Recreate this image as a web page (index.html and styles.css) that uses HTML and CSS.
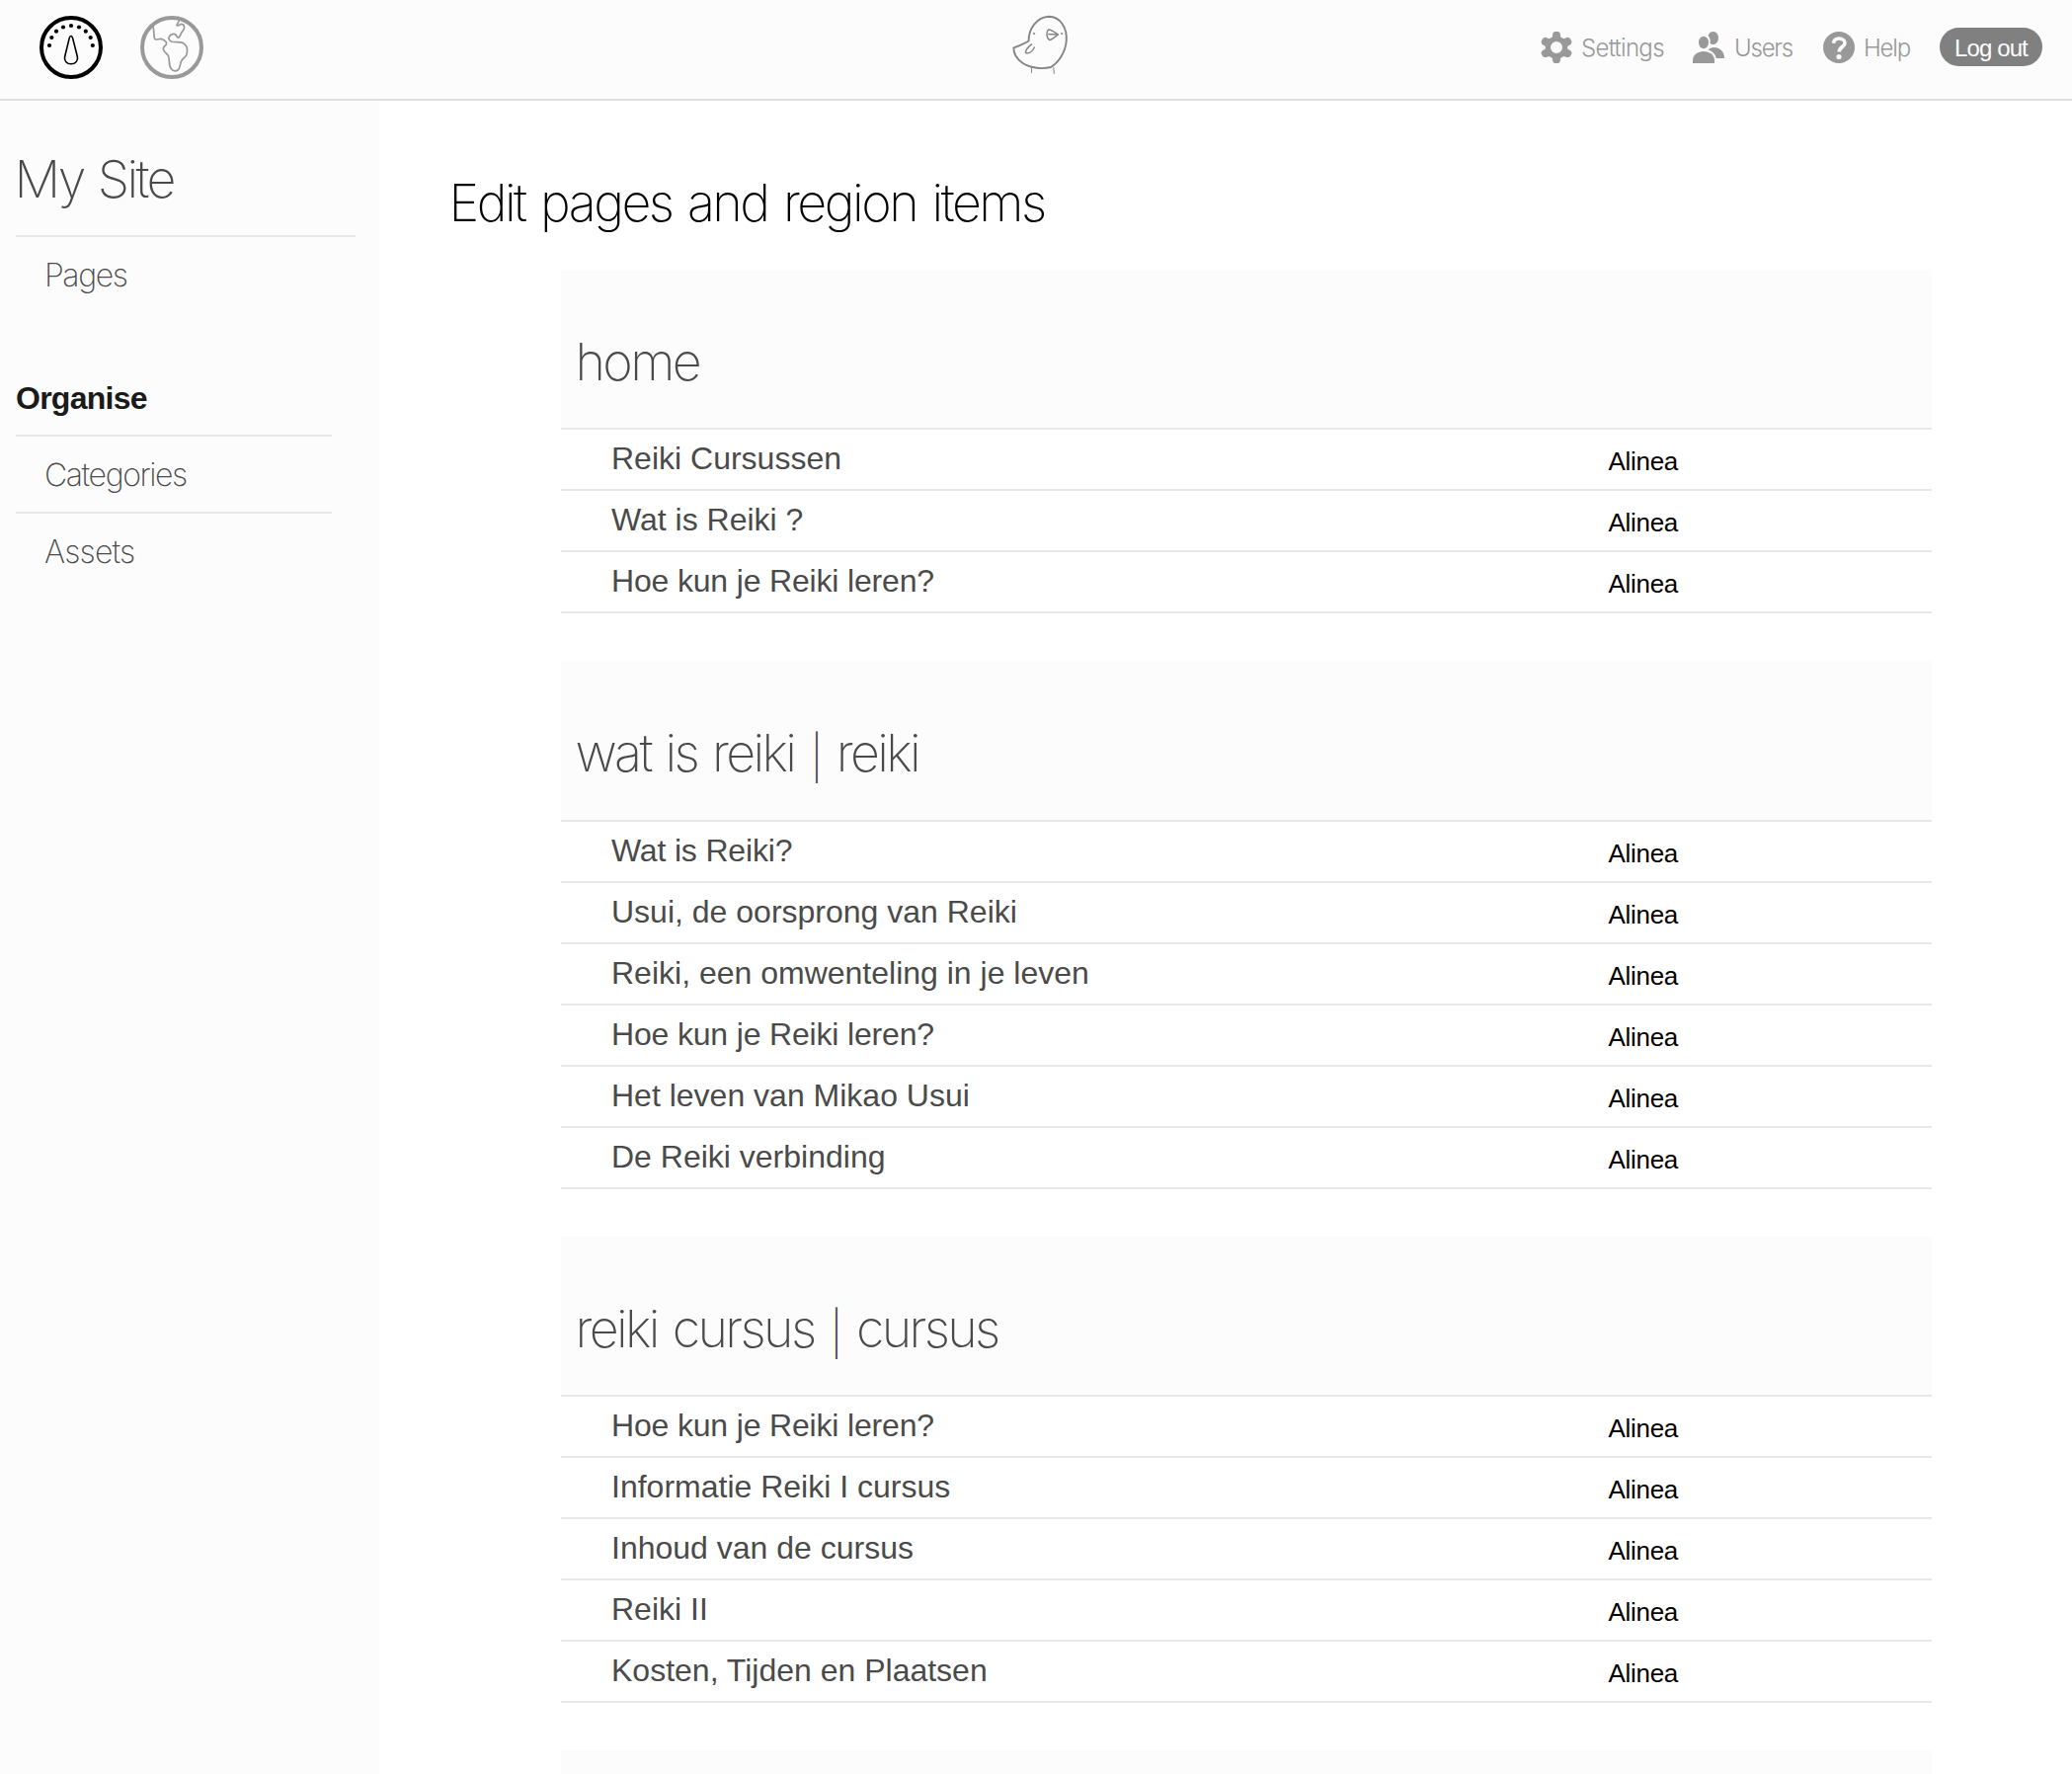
FILE: index.html
```html
<!DOCTYPE html>
<html lang="en">
<head>
<meta charset="utf-8">
<title>Edit pages and region items</title>
<link rel="stylesheet" href="styles.css">
</head>
<body>
<header class="topbar">
  <nav class="modes">
    <svg class="mode-icon" viewBox="0 0 64 64" fill="none" stroke="#000">
      <circle cx="32" cy="32" r="30" stroke-width="4"/>
      <path d="M31.9 20.5C30.9 20.5 30.5 21.4 30.2 22.6L25.6 41.5C24.6 45.6 27.8 48.8 31.9 48.8C36 48.8 39.4 45.6 38.4 41.5L33.6 22.6C33.3 21.4 32.9 20.5 31.9 20.5Z" stroke-width="1.6"/>
      <g fill="#000" stroke="none">
        <circle cx="10" cy="30" r="2.1"/><circle cx="12.3" cy="22" r="2.1"/><circle cx="17" cy="15.7" r="2.1"/><circle cx="24" cy="11.5" r="2.1"/><circle cx="32" cy="10" r="2.1"/><circle cx="40" cy="11.5" r="2.1"/><circle cx="46.8" cy="15.7" r="2.1"/><circle cx="51.7" cy="22" r="2.1"/><circle cx="53.8" cy="30" r="2.1"/>
      </g>
    </svg>
    <svg class="mode-icon" viewBox="0 0 64 64" fill="none" stroke="#999" stroke-linejoin="round">
      <circle cx="32" cy="32" r="30" stroke-width="4"/>
      <path d="M12.5 10C14 12 13.5 16 14 19C14.2 21.5 14 24.3 16.5 24C19 23.6 21 22.8 23 24C25.2 25.2 27.2 26.8 26.4 28.8C25.6 30.3 23.2 31 23.4 33.6C23.6 36.3 26.8 38 28.4 40.5C30 44 28.5 49.5 31.2 53.5C33.4 56.4 37.2 56.6 39 54C40.8 51.2 40.2 48 42 45.3C43.6 42.8 46.8 41.6 47.4 37.6C48 33.4 47 29.3 43.2 27.4C39.8 26 36.2 27.2 32.2 26.2C29.6 25.4 28.2 23.2 29.4 21C30.8 18.6 34.4 17.6 36.2 19.4C37.4 20.8 37 22.4 38.8 22C40.6 21 40.6 18.8 41.8 17C43 15.2 44.8 13.8 44.6 11.4C44.4 9 42.6 7.8 40.8 8.6C39.4 9.4 37.8 10.6 37 9.6C36.6 8.4 39.4 7 39 4.6" stroke-width="1.7"/>
    </svg>
  </nav>
  <svg class="bird" viewBox="0 0 60 64" fill="none" stroke="#858585" stroke-linecap="round" stroke-linejoin="round">
    <path d="M18.600 29.500C18.400 17 27 5.200 39 4.800C51 5.200 57.500 16 56.800 29C55.800 41.500 48.500 51.500 41 56C31 58.500 19 56.500 12 51.500C6.500 47.500 3.300 41.500 3.400 36.500C8.500 34.500 13.500 32.600 18.600 29.500" stroke-width="1.9"/>
    <path d="M48.500 23C45 20.500 41.500 18 38.500 18C36.200 20.500 36.500 26 39.500 28.500C42.500 28 45.500 25 48.500 23C45.500 22.600 42 23 38.800 22.500" stroke-width="1.500"/>
    <path d="M21.500 33C18 35 15 39.500 15.600 41.600C19 42.500 22.500 40 24.300 36" stroke-width="1.500"/>
    <path d="M21.500 56.500V61.500M43.800 56.500L44.300 62.500" stroke-width="1"/>
    <circle cx="24" cy="22" r=".6"/><circle cx="52" cy="22" r=".6"/>
  </svg>
  <nav class="tools">
    <a class="tool tool-settings">
      <svg class="tool-icon" viewBox="0 0 32 32" fill="#999">
        <path fill-rule="evenodd" d="M13.800 0H18.200L19.600 1.500L20.300 5.500L23.500 7.300L27 5.800L29.500 6.600L31.500 10.200L30.900 12.400L27.200 15V17.400L30.900 19.800L31.500 22L29.500 25.500L27 26.300L23.500 24.900L20.300 26.800L19.600 30.600L18.200 32H13.800L12.400 30.600L11.700 26.800L8.500 24.900L5 26.300L2.500 25.500L.5 22L1.100 19.800L4.800 17.400V15L1.100 12.400L.5 10.200L2.500 6.600L5 5.800L8.500 7.300L11.700 5.500L12.400 1.500ZM16 10A6 6 0 1 0 16 22A6 6 0 1 0 16 10Z"/>
      </svg>
      <span class="tool-label">Settings</span>
    </a>
    <a class="tool tool-users">
      <svg class="tool-icon" viewBox="0 0 32 32" fill="#999">
        <ellipse cx="11" cy="11" rx="5" ry="6.200"/>
        <path d="M0 32V29C0 23.500 5 20 11 20S22 23.500 22 29V32Z"/>
        <path d="M15.500 4.200C16.200 1.600 18.200 0 20.800 0C23.800 0 26 2.800 26 6.300S23.800 13 20.800 13C19.500 13 18.300 12.600 17.500 11.800C18.200 9 17.500 6 15.500 4.200Z"/>
        <path d="M15.500 18.400C17 17 19 16 21.500 16C27.500 16 32 20 32 27H23.800C22.800 22.500 19.800 19.500 15.500 18.400Z"/>
      </svg>
      <span class="tool-label">Users</span>
    </a>
    <a class="tool tool-help">
      <svg class="tool-icon" viewBox="0 0 32 32">
        <circle cx="16" cy="16" r="16" fill="#999"/>
        <path d="M10.500 11.800C11 8.500 13 7 16.200 7C19.700 7 22 8.900 22 11.700C22 15.200 16.400 15.500 16.200 20.500" fill="none" stroke="#fcfcfc" stroke-width="3.600"/>
        <circle cx="16" cy="25.500" r="2.600" fill="#fcfcfc"/>
      </svg>
      <span class="tool-label">Help</span>
    </a>
    <a class="logout"><span>Log out</span></a>
  </nav>
</header>
<div class="layout">
  <aside class="sidebar">
    <h2 class="site-name">My Site</h2>
    <ul class="menu menu-site"><li>Pages</li></ul>
    <h3 class="menu-title">Organise</h3>
    <ul class="menu menu-organise">
      <li>Categories</li>
      <li class="looser">Assets</li>
    </ul>
  </aside>
  <main class="content">
    <h1 class="page-title">Edit pages and region items</h1>
    <section class="region">
      <h2 class="region-title">home</h2>
      <ul class="items">
        <li><span>Reiki Cursussen</span><em>Alinea</em></li>
        <li><span>Wat is Reiki ?</span><em>Alinea</em></li>
        <li><span class="tight">Hoe kun je Reiki leren?</span><em>Alinea</em></li>
      </ul>
    </section>
    <section class="region">
      <h2 class="region-title">wat is reiki <i class="bar">|</i> reiki</h2>
      <ul class="items">
        <li><span class="tight">Wat is Reiki?</span><em>Alinea</em></li>
        <li><span>Usui, de oorsprong van Reiki</span><em>Alinea</em></li>
        <li><span>Reiki, een omwenteling in je leven</span><em>Alinea</em></li>
        <li><span class="tight">Hoe kun je Reiki leren?</span><em>Alinea</em></li>
        <li><span>Het leven van Mikao Usui</span><em>Alinea</em></li>
        <li><span>De Reiki verbinding</span><em>Alinea</em></li>
      </ul>
    </section>
    <section class="region">
      <h2 class="region-title">reiki cursus <i class="bar">|</i> cursus</h2>
      <ul class="items">
        <li><span class="tight">Hoe kun je Reiki leren?</span><em>Alinea</em></li>
        <li><span>Informatie Reiki I cursus</span><em>Alinea</em></li>
        <li><span>Inhoud van de cursus</span><em>Alinea</em></li>
        <li><span>Reiki II</span><em>Alinea</em></li>
        <li><span>Kosten, Tijden en Plaatsen</span><em>Alinea</em></li>
      </ul>
    </section>
    <section class="region region-next"></section>
  </main>
</div>
</body>
</html>
```
FILE: styles.css
```css
* { box-sizing: border-box; margin: 0; padding: 0; }
html, body { height: 100%; overflow: hidden; }
body {
  display: flex;
  flex-direction: column;
  background: #fff;
  color: #000;
  font-family: "Liberation Sans", Arial, sans-serif;
}
ul { list-style: none; }

.topbar {
  flex: none;
  display: grid;
  grid-template-columns: 1fr 60px 1fr;
  height: 102px;
  background: #fcfcfc;
  border-bottom: 2px solid #e0e0e0;
}
.modes { display: flex; gap: 38px; padding: 16px 0 0 40px; }
.mode-icon { width: 64px; height: 64px; }
.bird { width: 60px; height: 64px; margin: 12px 0 0 4px; }
.tools { display: flex; justify-content: flex-end; align-items: flex-start; padding: 28px 30px 0 0; }
.tool { display: flex; padding-top: 4px; }
.tool-icon { flex: none; width: 32px; height: 32px; }
.tool-label {
  font: 300 24px/33px Inter, "Liberation Sans", sans-serif;
  letter-spacing: -1.2px;
  color: #999;
  margin-left: 9px;
}
.tool-settings { width: 154px; }
.tool-settings .tool-label { letter-spacing: -0.7px; }
.tool-users { width: 132px; }
.tool-users .tool-label { margin-left: 10px; }
.tool-help { width: 118px; }
.logout {
  width: 104px;
  height: 39px;
  border-radius: 20px;
  background: #808080;
  color: #fff;
  font: 400 24px/42px "Liberation Sans", sans-serif;
  letter-spacing: -0.9px;
  text-align: center;
}

.layout { flex: 1; display: flex; min-height: 0; }
.sidebar { flex: none; width: 384px; padding: 0 24px 0 16px; background: #fcfcfc; }
.site-name {
  height: 136px;
  padding-top: 46.5px;
  text-indent: -1.5px;
  font: 200 52px/66px Inter, "Liberation Sans", sans-serif;
  letter-spacing: -2.6px;
  word-spacing: 2px;
  color: #4a4a4a;
}
.menu li {
  height: 78px;
  padding: 20px 0 0 29px;
  border-top: 2px solid #e8e8e8;
  font: 200 32px/38px Inter, "Liberation Sans", sans-serif;
  letter-spacing: -1.4px;
  color: #4a4a4a;
}
.menu .looser { letter-spacing: -0.8px; }
.menu-organise { margin-right: 24px; }
.menu-title {
  height: 124px;
  padding-top: 68px;
  font: 700 32px/38px "Liberation Sans", sans-serif;
  letter-spacing: -0.75px;
  color: #1a1a1a;
}

.content { flex: 1; padding: 0 142px 0 72px; }
.page-title {
  height: 170.5px;
  padding-top: 70.5px;
  text-indent: -1.5px;
  font: 200 52px/66px Inter, "Liberation Sans", sans-serif;
  letter-spacing: -2.5px;
  word-spacing: 3.2px;
}
.region { margin: 0 0 48px 112px; }
.region-title {
  height: 160.5px;
  padding: 61px 0 0 14.5px;
  background: #fcfcfc;
  font: 200 52px/66px Inter, "Liberation Sans", sans-serif;
  letter-spacing: -2.65px;
  word-spacing: 2.8px;
  color: #4a4a4a;
}
.bar {
  font-style: normal;
  font-size: 44px;
  line-height: 1;
  vertical-align: -2px;
  margin: 0 1.3px;
}
.region-next { height: 72px; margin-bottom: 0; background: #fcfcfc; }
.items { border-bottom: 2px solid #e8e8e8; }
.items li {
  display: flex;
  height: 62px;
  padding: 10px 0 0 51px;
  border-top: 2px solid #e8e8e8;
}
.items span { width: 1009.5px; font-size: 32px; line-height: 38px; color: #4a4a4a; }
.items .tight { letter-spacing: -0.17px; }
.items em { font-style: normal; font-size: 26px; line-height: 44px; letter-spacing: -0.3px; }
```
